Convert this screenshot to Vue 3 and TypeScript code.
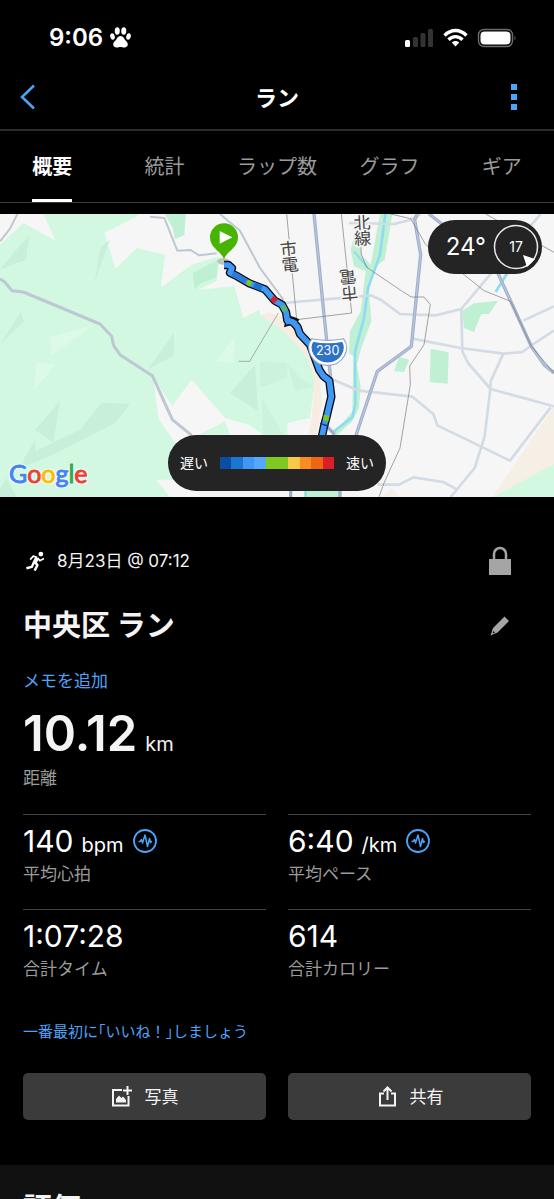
<script setup lang="ts">
import { ref } from 'vue'

interface Metric {
  value: string
  unit?: string
  label: string
  chart?: boolean
}

const tabs: string[] = ['概要', '統計', 'ラップ数', 'グラフ', 'ギア']
const active = ref<string>('概要')

const metrics: Metric[] = [
  { value: '140', unit: 'bpm', label: '平均心拍', chart: true },
  { value: '6:40', unit: '/km', label: '平均ペース', chart: true },
  { value: '1:07:28', label: '合計タイム' },
  { value: '614', label: '合計カロリー' },
]

const paceColors: string[] = [
  '#0b4da2', '#1976d2', '#3f97f6', '#56a8ff', '#7ec820',
  '#7ec820', '#f9c846', '#fb8b24', '#ee6611', '#dc1f26',
]

const route =
  'M672 181 L686 181 L696 190 L690 204 L712 215 L748 236 L795 254 L824 288 L846 300 L858 322 L862 348 L878 352 L892 366 L900 388 L930 420 L944 458 L958 496 L970 514 L988 528 L994 576 L980 635 L972 665 L964 705'
</script>

<template>
  <div class="page">
    <header>
      <div class="status">
        <div class="clock">
          <span>9:06</span>
          <svg width="21" height="21" viewBox="0 0 42 42" fill="#fff" aria-hidden="true">
            <ellipse cx="5" cy="19" rx="4.5" ry="6.5" transform="rotate(-12 5 19)" />
            <ellipse cx="14.500" cy="8" rx="5" ry="7.500" />
            <ellipse cx="27.500" cy="8" rx="5" ry="7.500" />
            <ellipse cx="37" cy="19" rx="4.500" ry="6.500" transform="rotate(12 37 19)" />
            <path d="M21 18 C27 18 28 24 32 28 C38 33 36 41 29 41 C25 41 24 40 21 40 C18 40 17 41 13 41 C6 41 4 33 10 28 C14 24 15 18 21 18Z" />
          </svg>
        </div>
        <svg class="phone" width="112" height="20" viewBox="0 0 112 20" aria-hidden="true">
          <rect x="0" y="12" width="5" height="7" rx="1.500" fill="#fff" />
          <g fill="#333">
            <rect x="8" y="9" width="5" height="10" rx="1.500" />
            <rect x="15.500" y="5" width="5" height="14" rx="1.500" />
            <rect x="23" y="1" width="5" height="18" rx="1.500" />
          </g>
          <g fill="none" stroke="#fff" stroke-width="3.400">
            <path d="M39.500 7.500 C46 0.800 55 0.800 61.500 7.500" />
            <path d="M43.500 11.700 C47.500 7.600 53.500 7.600 57.500 11.700" />
          </g>
          <path d="M46.800 14.500 C49 12.500 52 12.500 54.200 14.500 L50.500 18.500Z" fill="#fff" />
          <rect x="73.500" y="1.500" width="34" height="17" rx="5.500" fill="none" stroke="#6b6b6b" stroke-width="1.400" />
          <rect x="75.500" y="3.500" width="30" height="13" rx="4" fill="#fff" />
          <path d="M109.500 7.500 Q111.500 10 109.500 12.500Z" fill="#6b6b6b" />
        </svg>
      </div>
      <div class="bar">
        <button type="button" class="icon-button" aria-label="戻る">
          <svg width="16" height="26" viewBox="0 0 16 26" fill="none" stroke="#4da3f8" stroke-width="2.500"><path d="M14 1.500 L2 13 L14 24.500" /></svg>
        </button>
        <h1>ラン</h1>
        <button type="button" class="icon-button more" aria-label="メニュー">
          <svg width="6" height="26" viewBox="0 0 6 26" fill="#4da3f8"><path d="M0 0h6v6H0zM0 10h6v6H0zM0 20h6v6H0z" /></svg>
        </button>
      </div>
    </header>

    <nav class="tabs">
      <button v-for="tab in tabs" :key="tab" type="button" :class="{ active: tab === active }" @click="active = tab">
        <span>{{ tab }}</span>
      </button>
    </nav>

    <section class="map" aria-label="ルートマップ">
      <svg class="map-art" viewBox="0 28 1662 849" preserveAspectRatio="xMidYMid slice">
        <rect y="0" width="1662" height="900" fill="#f6f6f6" />
        <!-- forest -->
        <path fill="#d3f8e2" d="M130 28H412V35L313 85L347 192L410 130L495 150L483 248L575 180L660 155L650 230L595 255L703 245L730 340L778 315L782 332L840 370L882 410L925 465L945 530L930 640L862 655V690H555V825H468L510 877H0V120L70 55L167 108Z" />
        <path fill="#f7ece2" d="M782 332L808 322L850 340L890 375L925 440L960 520L965 600L950 690H925L935 640L945 530L925 465L882 410L840 370Z" />
        <path fill="#f6f6f6" d="M460 520L475 640L535 730L800 700L750 662L675 640L575 525L517 603Z" />
        <path fill="#d3f8e2" d="M595 690L675 650L690 690Z" />
        <g fill="#bff0d4">
          <path d="M495 28H557L553 92L525 103L518 70Z" />
          <path d="M578 205L655 165L650 218L595 240L585 256Z" />
        </g>
        <g fill="#c8efd9">
          <path d="M88 92L78 165L0 195L45 140Z" />
          <path d="M62 322L72 350L0 418Z" />
          <path d="M330 105L300 130L284 232L310 160Z" />
          <path d="M522 385V452L443 495Z" />
          <path d="M180 590L160 714L105 676Z" />
          <path d="M305 594L390 598L345 655L170 745L65 790L75 755L240 675Z" />
          <path d="M765 480L775 620L690 565Z" />
          <path d="M780 470L862 475L885 560L940 545L900 520L862 475V520L782 548Z" opacity="0.600" />
          <path d="M785 580L850 690H790Z" opacity="0.600" />
          <path d="M20 820L50 877H0V850Z" />
          <path d="M105 705L108 750L75 760Z" />
        </g>
        <g fill="#dcfae5">
          <path d="M148 398L290 358L155 452Z" />
          <path d="M110 472L165 482L100 560Z" />
          <path d="M705 395L702 475L648 470Z" />
        </g>

        <g transform="translate(822 0)">
          <path fill="#f5efe5" d="M840 605L655 877H840Z" />
          <path fill="#d3f8e2" d="M658 877L840 778V877Z" />
          <path fill="#f5efe5" d="M320 877L355 850L375 877Z" />
          <g fill="#bff0d4">
            <path d="M318 28H355L332 165L300 190L285 260L292 350L262 430L248 480L260 545L255 610L235 650L190 690H176L235 620L238 455L225 445L228 380L260 320L275 200L240 185L230 135L250 60L262 150L290 180Z" />
            <path d="M470 432L524 443L521 537L467 532Z" />
            <path d="M375 457L406 465L390 502L360 500Z" />
            <path d="M565 318L600 296L672 288L645 328L622 328L600 382L570 370Z" />
            <path d="M90 857H200V877H90Z" />
          </g>
          <g fill="none" stroke="#8fdcf0">
            <path stroke-width="8" d="M334 28L318 150L300 200L282 250L270 340L243 440L244 600L235 638L180 680" />
            <path stroke-width="6" d="M240 140L282 190" />
            <path stroke-width="8" d="M700 205L665 262" />
            <path stroke-width="7" d="M95 860V877" />
          </g>
          <g fill="none" stroke="#d3dbe4" stroke-width="8" stroke-linejoin="round">
            <path d="M30 295L290 272L320 285L378 328L485 332L562 313L800 28" />
            <path d="M225 55L360 58L410 45L440 28" />
            <path d="M562 313L565 440L582 475L650 553L840 605" />
            <path d="M415 402L560 430L688 447L745 442L778 418L840 378" />
            <path d="M748 348L840 305" />
            <path d="M688 447L650 530L648 560L632 695L602 790L530 877" />
            <path d="M165 520L255 558L415 576L478 628L490 662L708 768L830 608" />
            <path d="M310 840H375L418 818L508 832L550 855" />
          </g>
          <g fill="none" stroke="#9fafcb" stroke-width="10" stroke-linejoin="round">
            <path d="M120 28L150 330L170 520" />
            <path d="M430 28L422 45L440 150L412 425L310 500L245 695" />
            <path d="M465 28L660 180L772 425L810 480L840 505" />
            <path d="M50 857V877M198 857V877M150 655L182 690" />
          </g>
          <g fill="none" stroke="#b7c4da" stroke-width="4" stroke-linejoin="round">
            <path d="M120 28L150 330L170 520" />
            <path d="M430 28L422 45L440 150L412 425L310 500L245 695" />
            <path d="M465 28L660 180L772 425L810 480L840 505" />
          </g>
          <g fill="none" stroke="#777" stroke-width="2">
            <path d="M38 28L68 345L233 325L202 28" />
            <path d="M258 70L262 150L278 188L385 260L412 277H450L469 300L450 420L407 484L409 540L378 730L330 835L315 877" />
            <path d="M350 28L410 42L455 120L570 210L630 258L710 290L772 425L840 505" />
            <path d="M635 28L840 143" />
          </g>
          <g class="map-label" text-anchor="middle" font-size="51">
            <g transform="rotate(-6 46 157)"><text x="46" y="151">市</text><text x="46" y="199">電</text></g>
            <g transform="rotate(174 224 241)"><text x="224" y="236">市</text><text x="224" y="284">電</text></g>
            <g transform="rotate(-3 265 78)"><text x="265" y="73">北</text><text x="265" y="120">線</text></g>
          </g>
        </g>

        <g fill="none" stroke="#bdc8d3" stroke-linejoin="round">
          <path stroke-width="9" d="M0 222L14 232L36 258L70 262L300 358L335 395L341 423L360 450L457 513L517 645L575 692" />
          <path stroke-width="6" d="M0 110L30 72L52 28" />
          <path stroke-width="6" d="M450 36L493 40L532 138L572 136L597 152L650 146" />
          <path stroke-width="6" d="M660 28L692 55L720 78L780 190L850 285" />
        </g>
        <path fill="none" stroke="#888" stroke-width="2" d="M716 470H749L835 325" />
        <ellipse cx="670" cy="170" rx="18" ry="10" fill="#9aa79d" opacity="0.600" />

        <path :d="route" fill="none" stroke="#0a0f16" stroke-width="25" stroke-linejoin="round" />
        <path d="M860 330L852 368L876 360L882 376L898 344L884 338Z" fill="#0a0f16" />
        <path :d="route" fill="none" stroke="#3f97f6" stroke-width="17" stroke-linejoin="round" />
        <path d="M862 338L858 360L878 354L886 366L892 350L878 344Z" fill="#3f97f6" />
        <g fill="none" stroke-width="17">
          <path stroke="#2a7cd8" d="M697 207L712 215L738 230" />
          <path stroke="#7ec820" d="M741 232L754 238" />
          <path stroke="#1976d2" d="M762 241L785 250" />
          <path stroke="#dc1f26" d="M816 279L828 290" />
          <path stroke="#55b879" d="M848 303L856 319" />
          <path stroke="#7ec820" d="M980 632L977 648" />
          <path stroke="#163d70" stroke-width="4" d="M960 656L984 664" />
        </g>
        <path fill="#46b400" d="M672 163C663 140 630 130 630 98A42 42 0 0 1 714 98C714 130 681 140 672 163Z" />
        <path fill="#fff" d="M659 79V117L697 98Z" />

        <path fill="#2f73c8" stroke="#8fa7cf" stroke-width="14" d="M938 408Q983 417 1028 408C1046 432 1026 477 983 477C940 477 920 432 938 408Z" />
        <path fill="#2f73c8" stroke="#fff" stroke-width="7" d="M938 408Q983 417 1028 408C1046 432 1026 477 983 477C940 477 920 432 938 408Z" />
        <text class="shield" x="983" y="451" text-anchor="middle" font-size="38">230</text>
      </svg>

      <div class="google"><span class="b">G</span><span class="r">o</span><span class="y">o</span><span class="b">g</span><span class="g">l</span><span class="r">e</span></div>

      <div class="weather">
        <span>24°</span>
        <svg width="46" height="46" viewBox="0 0 46 46">
          <circle cx="23" cy="23" r="21.500" fill="none" stroke="#e8e8e8" stroke-width="1.500" />
          <path d="M30 31L42 35L34 43Z" fill="#fff" />
          <text x="23" y="28" text-anchor="middle" font-size="14" fill="#fff">17</text>
        </svg>
      </div>

      <div class="legend">
        <span>遅い</span>
        <div class="scale"><i v-for="(color, n) in paceColors" :key="n" :style="{ background: color }"></i></div>
        <span>速い</span>
      </div>
    </section>

    <main>
      <div class="row when">
        <div class="date">
          <svg width="20" height="20" viewBox="75 60 58 58" fill="none" stroke="#fff" stroke-linejoin="round" aria-hidden="true">
            <circle cx="121" cy="69" r="7" fill="#fff" stroke="none" />
            <path stroke-width="12" d="M110 80L103 94" />
            <path stroke-width="5" d="M111 79L99 75L90 85M112 80L118 88L130 82" />
            <path stroke-width="7" d="M103 92L111 101L103 117M101 92L95 106L79 110" />
          </svg>
          <span>8月23日 @ 07:12</span>
        </div>
        <button type="button" class="icon-button" aria-label="非公開">
          <svg width="22" height="30" viewBox="0 0 22 30"><path d="M0 13H22V29H0Z" fill="#a5a5a5" /><path d="M5 14V8A6 6 0 0 1 17 8V14" fill="none" stroke="#a5a5a5" stroke-width="2.500" /></svg>
        </button>
      </div>

      <div class="row title">
        <h2>中央区 ラン</h2>
        <button type="button" class="icon-button" aria-label="名前を編集">
          <svg width="20" height="20" viewBox="0 0 20 20" fill="#a5a5a5"><path d="M14.500 0.500L19 5L7.500 16.500L0.500 19.500L3 12ZM3.500 15L2.500 17.500L5 16.500Z" fill-rule="evenodd" /></svg>
        </button>
      </div>

      <a class="memo" href="#memo">メモを追加</a>

      <div class="distance"><strong>10.12</strong><span class="unit">km</span></div>
      <div class="label">距離</div>

      <div class="metrics">
        <div v-for="m in metrics" :key="m.label" class="metric">
          <div class="value">
            <span>{{ m.value }}<span v-if="m.unit" class="unit">{{ m.unit }}</span></span>
            <svg v-if="m.chart" width="24" height="24" viewBox="0 0 24 24" fill="none" stroke="#4da3f8" stroke-linejoin="round" aria-hidden="true">
              <circle cx="12" cy="12" r="11" stroke-width="1.800" />
              <path stroke-width="1.500" d="M5.500 12.500H7L8.500 10.500L9.500 14L12 6L14.500 17.500L16.500 9.500L17.500 13.500L18.800 12" />
            </svg>
          </div>
          <div class="label">{{ m.label }}</div>
        </div>
      </div>

      <a class="like" href="#like">一番最初に<span class="half">「</span>いいね！<span class="half">」</span>しましょう</a>

      <div class="actions">
        <button type="button">
          <svg width="21" height="21" viewBox="0 0 21 21" fill="none" stroke="#f4f4f4" stroke-width="2" aria-hidden="true">
            <path d="M11 4H2V19.500H17.500V10M16.500 0V9M12 4.500H21" /><path d="M5 16.500V13L8 9.500L10.500 12L12 10.500L15 14V16.500Z" fill="#f4f4f4" stroke="none" />
          </svg>
          <span>写真</span>
        </button>
        <button type="button">
          <svg width="21" height="21" viewBox="-3 0 21 21" fill="none" stroke="#f4f4f4" stroke-width="2" aria-hidden="true">
            <path d="M5 7.500H1V19.500H16V7.500H12M8.500 14V2M4.500 5.500L8.500 1.500L12.500 5.500" />
          </svg>
          <span>共有</span>
        </button>
      </div>
    </main>

    <section class="rating"><h2>評価</h2></section>
  </div>
</template>

<style>
body { margin: 0; background: #000; }
</style>

<style scoped>
.page {
  height: 100vh;
  overflow: hidden auto;
  scrollbar-width: none;
  background: #000;
  color: #f4f4f4;
  font-family: Inter, "Noto Sans CJK JP", sans-serif;
  font-size: 17px;
  line-height: 24px;
}
button { font: inherit; color: inherit; background: none; border: 0; padding: 0; cursor: pointer; }
a { text-decoration: none; color: #4da3f8; display: block; }
h1, h2 { margin: 0; }
svg { display: block; flex: none; }

header { border-bottom: 2px solid #2c2c2c; }
.status { display: flex; justify-content: space-between; align-items: center; padding: 22px 37px 0 49px; height: 31px; }
.clock { display: flex; align-items: center; gap: 7px; font-size: 24px; font-weight: 600; color: #fff; }
.bar { display: flex; justify-content: space-between; align-items: center; padding: 25px 20px 13px; }
.bar h1 { font-size: 22px; line-height: 36px; padding-top: 2px; font-weight: 700; color: #fff; }
.bar .icon-button { width: 40px; display: flex; }
.bar .more { justify-content: center; }

.tabs { display: flex; margin: 0 -4px 11px; border-bottom: 1px solid #3c3c3c; }
.tabs button { flex: 1 1 0; padding-top: 4px; color: #9b9b9b; font-size: 20px; line-height: 64px; white-space: nowrap; }
.tabs span { display: inline-block; border-bottom: 3px solid transparent; }
.tabs .active { color: #fff; font-weight: 700; }
.tabs .active span { border-color: #fff; }

.map { position: relative; aspect-ratio: 554 / 283; overflow: hidden; }
.map-art { width: 100%; height: 100%; }
.map-label { fill: #444; stroke: #f6f6f6; stroke-width: 8px; paint-order: stroke; }
.shield { fill: #fff; font-weight: 400; }
.google {
  position: absolute; left: 9px; bottom: 7px;
  font-family: Lato, sans-serif; font-size: 25px; line-height: 34px; font-weight: 400;
  -webkit-text-stroke: 1px currentColor;
  text-shadow: 0 0 2px #fff, 1px 1px 1px #fff, -1px -1px 1px #fff, 1px -1px 1px #fff, -1px 1px 1px #fff;
}
.b { color: #4285f4; }
.r { color: #ea4335; }
.y { color: #fbbc05; }
.g { color: #34a853; }
.weather, .legend { position: absolute; display: flex; align-items: center; background: #242424; color: #fff; border-radius: 28px; }
.weather { top: 6px; right: 12px; height: 54px; padding: 0 3px 0 18px; gap: 7px; font-size: 24px; }
.legend { bottom: 6px; left: 50%; transform: translateX(-50%); height: 56px; padding: 0 12px; gap: 12px; font-size: 14px; white-space: nowrap; }
.scale { display: flex; width: 114px; height: 12px; }
.scale i { flex: 1; }

main { padding: 49px 23px 45px; }
.row { display: flex; align-items: center; justify-content: space-between; }
.when { height: 30px; padding-right: 20px; }
.date { display: flex; align-items: center; gap: 12px; padding-left: 2px; }
.title { margin-top: 30px; padding-right: 21px; }
h2 { font-size: 29px; line-height: 40px; font-weight: 700; }
.memo { margin-top: 23px; }
.distance { margin-top: 13px; font-size: 49px; line-height: 56px; }
.distance strong { font-weight: 600; }
.unit { font-size: 20px; line-height: 20px; margin-left: 8px; }
.label { margin-top: 4px; color: #9b9b9b; }
.metrics { display: grid; grid-template-columns: 1fr 1fr; column-gap: 22px; margin-top: 24px; }
.metric { border-top: 1px solid #444; padding: 8px 0 23px; }
.value { display: flex; align-items: center; gap: 9px; font-size: 30px; line-height: 36px; color: #fff; }
.metric .label { margin-top: 3px; }
.like { margin-top: 16px; font-size: 15px; }
.half { font-feature-settings: "halt"; }
.actions { display: grid; grid-template-columns: 1fr 1fr; gap: 22px; margin-top: 29px; }
.actions button { display: flex; align-items: center; justify-content: center; gap: 13px; height: 47px; border-radius: 5px; background: #3b3b3b; }
.rating { background: #111; padding: 24px 23px 40px; }
</style>
